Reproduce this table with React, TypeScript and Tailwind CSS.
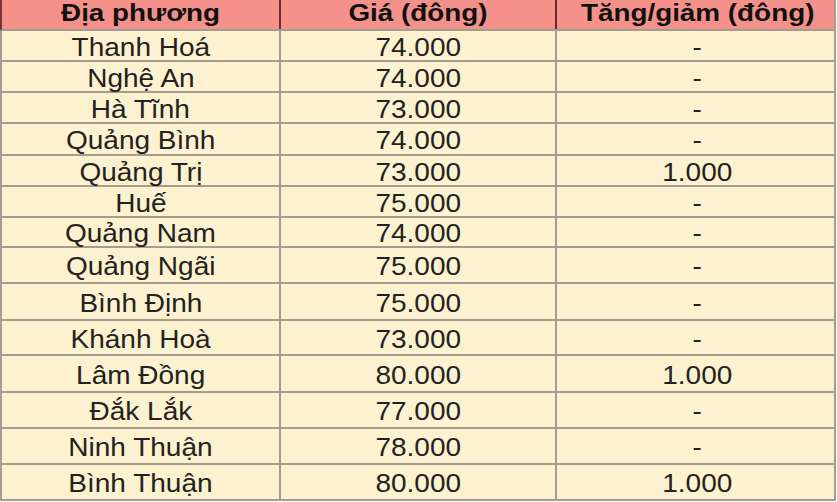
import React from 'react';

const ROWS: [string, string, string, number][] = [
  ['Thanh Hoá', '74.000', '-', 31],
  ['Nghệ An', '74.000', '-', 31],
  ['Hà Tĩnh', '73.000', '-', 31],
  ['Quảng Bình', '74.000', '-', 32],
  ['Quảng Trị', '73.000', '1.000', 31],
  ['Huế', '75.000', '-', 31],
  ['Quảng Nam', '74.000', '-', 30],
  ['Quảng Ngãi', '75.000', '-', 36],
  ['Bình Định', '75.000', '-', 37],
  ['Khánh Hoà', '73.000', '-', 35],
  ['Lâm Đồng', '80.000', '1.000', 37],
  ['Đắk Lắk', '77.000', '-', 36],
  ['Ninh Thuận', '78.000', '-', 36],
  ['Bình Thuận', '80.000', '1.000', 36],
];

const Txt = ({ children, head }: { children: React.ReactNode; head?: boolean }) =>
  head
    ? <span className="inline-block scale-x-[1.16] text-[24px] font-bold leading-none text-[#111]">{children}</span>
    : <span className="inline-block scale-x-[1.12] text-[25px] leading-none text-[#222]">{children}</span>;

export default function App() {
  return (
    <div className="w-[837px] h-[502px] bg-white" style={{ fontFamily: '"Liberation Sans", Arial, sans-serif' }}>
      <div className="w-[836px]">
        {/* header */}
        <div className="grid grid-cols-[279px_276px_281px] h-[31px] bg-[#f4918a] border-l-2 border-r-2 border-b-2 border-l-[#7a3434] border-r-[#a39d8f] border-b-[#a39d8f]">
          <div className="flex items-center justify-center border-r-2 border-[#6e2a2a] pb-[3px]"><Txt head>Địa phương</Txt></div>
          <div className="flex items-center justify-center border-r-2 border-[#6e2a2a] pb-[3px]"><Txt head>Giá (đông)</Txt></div>
          <div className="flex items-center justify-center pb-[3px]"><Txt head>Tăng/giảm (đông)</Txt></div>
        </div>
        {ROWS.map(([name, price, diff, h]) => (
          <div key={name} className="grid grid-cols-[279px_276px_281px] bg-[#fdf2d0] border-l-2 border-r-2 border-b-2 border-[#a39d8f]" style={{ height: h }}>
            <div className="flex items-center justify-center border-r-2 border-[#a39d8f] pt-[3px]"><Txt>{name}</Txt></div>
            <div className="flex items-center justify-center border-r-2 border-[#a39d8f] pt-[3px]"><Txt>{price}</Txt></div>
            <div className="flex items-center justify-center pt-[3px]"><Txt>{diff}</Txt></div>
          </div>
        ))}
      </div>
    </div>
  );
}
